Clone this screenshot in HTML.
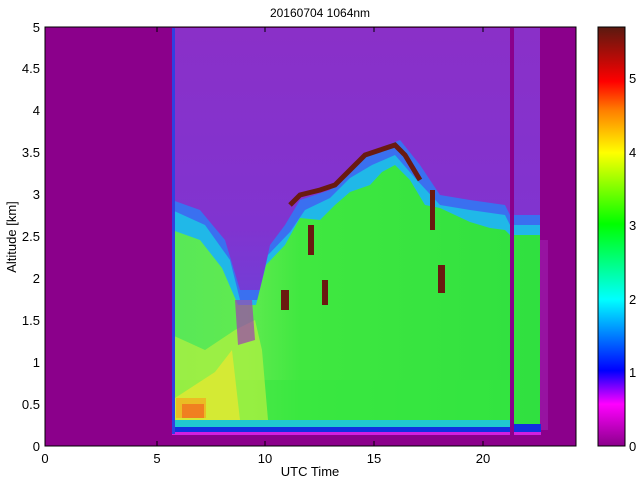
<!DOCTYPE html>
<html><head><style>
body{margin:0;background:#fff;width:640px;height:480px;overflow:hidden;font-family:"Liberation Sans",sans-serif}
</style></head><body>
<svg width="640" height="480" xmlns="http://www.w3.org/2000/svg" font-family="Liberation Sans, sans-serif" font-size="13">
<defs>
<linearGradient id="cb" x1="0" y1="1" x2="0" y2="0">
<stop offset="0" stop-color="#8b008b"/>
<stop offset="0.1" stop-color="#ff00ff"/>
<stop offset="0.18" stop-color="#0000ff"/>
<stop offset="0.35" stop-color="#00ffff"/>
<stop offset="0.53" stop-color="#00ff00"/>
<stop offset="0.7" stop-color="#ffff00"/>
<stop offset="0.8" stop-color="#ff8000"/>
<stop offset="0.87" stop-color="#ff0000"/>
<stop offset="1" stop-color="#5a1a10"/>
</linearGradient>
<linearGradient id="gr" x1="0" y1="0" x2="1" y2="0">
<stop offset="0" stop-color="#58e858"/>
<stop offset="0.2" stop-color="#60ea50"/>
<stop offset="0.35" stop-color="#40e840"/>
<stop offset="1" stop-color="#30e040"/>
</linearGradient>
<linearGradient id="up" x1="0" y1="0" x2="0" y2="1">
<stop offset="0" stop-color="#8a30c8"/>
<stop offset="0.5" stop-color="#8034d0"/>
<stop offset="1" stop-color="#5a50e0"/>
</linearGradient>
</defs>
<rect x="45" y="27" width="531" height="419" fill="#8b008b"/>
<rect x="172" y="28" width="368" height="400" fill="url(#up)"/>
<rect x="540" y="240" width="8" height="190" fill="#a020b0" opacity="0.6"/>
<!-- cyan/blue band -->
<polygon fill="#3a70f0" points="172,200 200,210 225,240 240,290 260,290 270,245 285,225 300,200 330,190 350,168 370,152 400,140 420,165 440,195 470,200 505,205 510,215 540,215 540,420 172,420"/>
<polygon fill="#20b8e8" points="172,210 205,225 230,260 240,300 258,300 268,255 290,232 305,210 330,198 350,178 372,165 395,155 415,178 440,205 470,210 505,215 510,225 540,225 540,420 172,420"/>
<!-- green region -->
<polygon fill="url(#gr)" points="172,230 200,240 222,268 238,305 256,305 266,265 285,245 300,218 320,220 335,205 350,192 370,185 382,172 395,165 410,180 425,205 440,208 455,215 470,222 490,228 505,230 510,235 540,235 540,430 172,430"/>
<rect x="172" y="380" width="340" height="45" fill="#33e840" opacity="0.5"/>
<polygon fill="#b0f040" opacity="0.75" points="172,335 205,350 235,330 255,320 262,350 268,420 172,420"/>
<polygon fill="#e8e830" opacity="0.75" points="172,400 195,385 215,372 232,350 240,420 172,420"/>
<rect x="176" y="398" width="30" height="20" fill="#f0b020" opacity="0.8"/>
<rect x="182" y="404" width="22" height="14" fill="#f08020"/>
<!-- brown cloud tops -->
<polyline fill="none" stroke="#6a1a10" stroke-width="5" points="290,205 300,195 320,190 335,185 350,170 365,155 380,150 395,145 405,155 420,180"/>
<rect x="308" y="225" width="6" height="30" fill="#6a1a10"/>
<rect x="281" y="290" width="8" height="20" fill="#6a1a10"/>
<rect x="322" y="280" width="6" height="25" fill="#6a1a10"/>
<rect x="438" y="265" width="7" height="28" fill="#6a1a10"/>
<rect x="430" y="190" width="5" height="40" fill="#6a1a10"/>
<polygon fill="#a040b0" opacity="0.7" points="235,300 252,300 255,340 238,345"/>
<!-- bottom band -->
<rect x="172" y="420" width="340" height="8" fill="#20c8d0"/>
<rect x="172" y="427" width="340" height="5" fill="#1030e0"/>
<rect x="172" y="432" width="340" height="3" fill="#d020e0"/>
<rect x="514" y="424" width="27" height="8" fill="#1030e0"/>
<rect x="514" y="432" width="27" height="3" fill="#d020e0"/>
<!-- gaps -->
<rect x="510" y="28" width="4" height="410" fill="#8b008b"/>
<rect x="172" y="28" width="3" height="406" fill="#3040e0"/>
<rect x="45" y="27" width="531" height="419" fill="none" stroke="#000" stroke-width="1"/>
<g stroke="#000">
<line x1="45" y1="446" x2="45" y2="441"/><line x1="157" y1="446" x2="157" y2="441"/><line x1="265" y1="446" x2="265" y2="441"/><line x1="374" y1="446" x2="374" y2="441"/><line x1="483" y1="446" x2="483" y2="441"/>
<line x1="157" y1="27" x2="157" y2="32"/><line x1="265" y1="27" x2="265" y2="32"/><line x1="374" y1="27" x2="374" y2="32"/><line x1="483" y1="27" x2="483" y2="32"/>
</g>
<g text-anchor="middle" fill="#000">
<text x="45" y="463">0</text><text x="157" y="463">5</text><text x="265" y="463">10</text><text x="374" y="463">15</text><text x="483" y="463">20</text>
<text x="310" y="476">UTC Time</text>
<text x="320" y="17" font-size="12">20160704 1064nm</text>
</g>
<g text-anchor="end" fill="#000">
<text x="40" y="451">0</text><text x="40" y="409">0.5</text><text x="40" y="367">1</text><text x="40" y="325">1.5</text><text x="40" y="283">2</text><text x="40" y="241">2.5</text><text x="40" y="199">3</text><text x="40" y="157">3.5</text><text x="40" y="115">4</text><text x="40" y="73">4.5</text><text x="40" y="32">5</text>
</g>
<text transform="translate(16,237) rotate(-90)" text-anchor="middle">Altitude [km]</text>
<rect x="598" y="27" width="27" height="419" fill="url(#cb)" stroke="#000"/>
<g fill="#000">
<text x="629" y="451">0</text><text x="629" y="377">1</text><text x="629" y="304">2</text><text x="629" y="230">3</text><text x="629" y="157">4</text><text x="629" y="83">5</text>
</g>
</svg>
</body></html>
